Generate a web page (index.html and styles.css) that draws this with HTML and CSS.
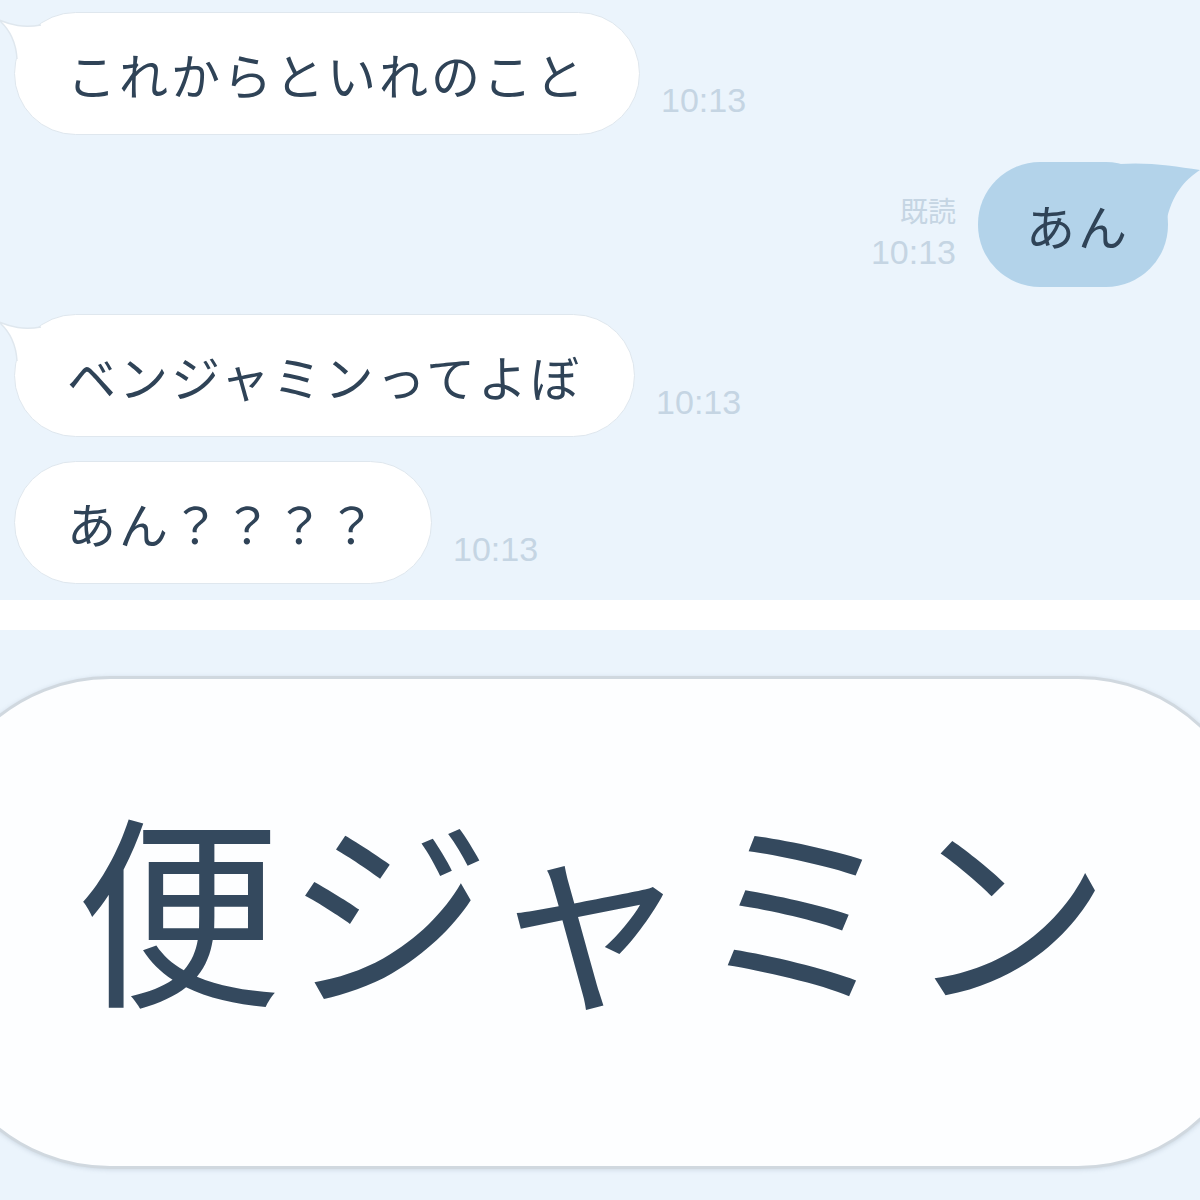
FILE: index.html
```html
<!DOCTYPE html>
<html lang="ja">
<head>
    <meta charset="UTF-8">
    <meta name="viewport" content="width=device-width, initial-scale=1.0">
    <title>便ジャミン</title>
    <link rel="stylesheet" href="styles.css">
</head>
<body>

    <div class="chat">
        <div class="row row-left">
            <div class="bubble bubble-in">
                <svg class="tail tail-left" width="44" height="48" viewBox="0 0 44 48">
                    <path d="M0 7 C12 12 24 15 42 12 L42 48 L18 48 C17 27 9 15 0 7 Z" fill="#fff"/>
                    <path d="M42 12 C24 15 12 12 0 7 C9 15 17 27 18 46" fill="none" stroke="#dfe7ee" stroke-width="1.5"/>
                </svg>
                <span class="msg">これからといれのこと</span>
            </div>
            <span class="time">10:13</span>
        </div>

        <div class="row row-right">
            <div class="meta">
                <span class="read">既読</span>
                <span class="time">10:13</span>
            </div>
            <div class="bubble bubble-out">
                <svg class="tail tail-right" width="80" height="56" viewBox="0 0 80 56">
                    <path d="M0 2 C28 0 54 4 80 8 C68 16 54 28 47 56 L0 56 Z" fill="#b3d3ea"/>
                </svg>
                <span class="msg">あん</span>
            </div>
        </div>

        <div class="row row-left">
            <div class="bubble bubble-in">
                <svg class="tail tail-left" width="44" height="48" viewBox="0 0 44 48">
                    <path d="M0 7 C12 12 24 15 42 12 L42 48 L18 48 C17 27 9 15 0 7 Z" fill="#fff"/>
                    <path d="M42 12 C24 15 12 12 0 7 C9 15 17 27 18 46" fill="none" stroke="#dfe7ee" stroke-width="1.5"/>
                </svg>
                <span class="msg">ベンジャミンってよぼ</span>
            </div>
            <span class="time">10:13</span>
        </div>

        <div class="row row-left row-last">
            <div class="bubble bubble-in">
                <span class="msg">あん？？？？</span>
            </div>
            <span class="time">10:13</span>
        </div>
    </div>

    <div class="divider"></div>

    <div class="closeup">
        <div class="big-bubble">
            <span class="big-msg">便ジャミン</span>
        </div>
    </div>

</body>
</html>
```

FILE: styles.css
```css
body {
    margin: 0;
    padding: 0;
    background-color: #fff;
    font-family: 'Noto Sans CJK JP', 'Noto Sans', sans-serif;
    width: 1200px;
    overflow: hidden;
}

.chat {
    background-color: #ebf4fc;
    height: 600px;
    box-sizing: border-box;
    padding: 12px 0 0 14px;
    overflow: hidden;
}

.row {
    display: flex;
    align-items: flex-end;
    margin-bottom: 27px;
}

.row-right {
    justify-content: flex-end;
    padding-right: 32px;
}

.row-last {
    margin-top: -3px;
}

.bubble {
    position: relative;
    display: flex;
    align-items: center;
    height: 123px;
    box-sizing: border-box;
    border-radius: 62px;
}

.bubble-in {
    background-color: #fff;
    border: 1.5px solid #dfe7ee;
    padding: 0 52px 0 52px;
}

.bubble-out {
    background-color: #b3d3ea;
    height: 125px;
    padding: 0 38px 0 48px;
}

.msg {
    position: relative;
    font-size: 49px;
    letter-spacing: 3px;
    color: #2f4357;
    line-height: 1;
}

.tail {
    position: absolute;
}

.tail-left {
    left: -16px;
    top: 0;
}

.tail-right {
    right: -32px;
    top: 0;
}

.time {
    font-family: 'Liberation Sans', Arial, sans-serif;
    font-size: 34px;
    line-height: 1;
    color: #c5d5e3;
    margin: 0 0 18px 21px;
}

.meta {
    display: flex;
    flex-direction: column;
    align-items: flex-end;
    margin: 0 22px 18px 0;
}

.meta .time {
    margin: 0;
}

.read {
    font-size: 28px;
    line-height: 1;
    color: #c5d5e3;
    margin-bottom: 11px;
}

.divider {
    height: 30px;
    background-color: #fff;
}

.closeup {
    background-color: #ebf4fc;
    height: 570px;
    padding-top: 46px;
    box-sizing: border-box;
    overflow: hidden;
}

.big-bubble {
    display: flex;
    align-items: center;
    width: 1328px;
    height: 493px;
    margin-left: -70px;
    box-sizing: border-box;
    padding-left: 143px;
    background-color: #fdfeff;
    border: 3px solid #d0d8df;
    border-radius: 180px;
    box-shadow: 0 1px 4px rgba(120, 140, 160, 0.25);
}

.big-msg {
    font-size: 205px;
    line-height: 1;
    color: #34495e;
    margin-top: -42px;
    letter-spacing: 5px;
}
```
